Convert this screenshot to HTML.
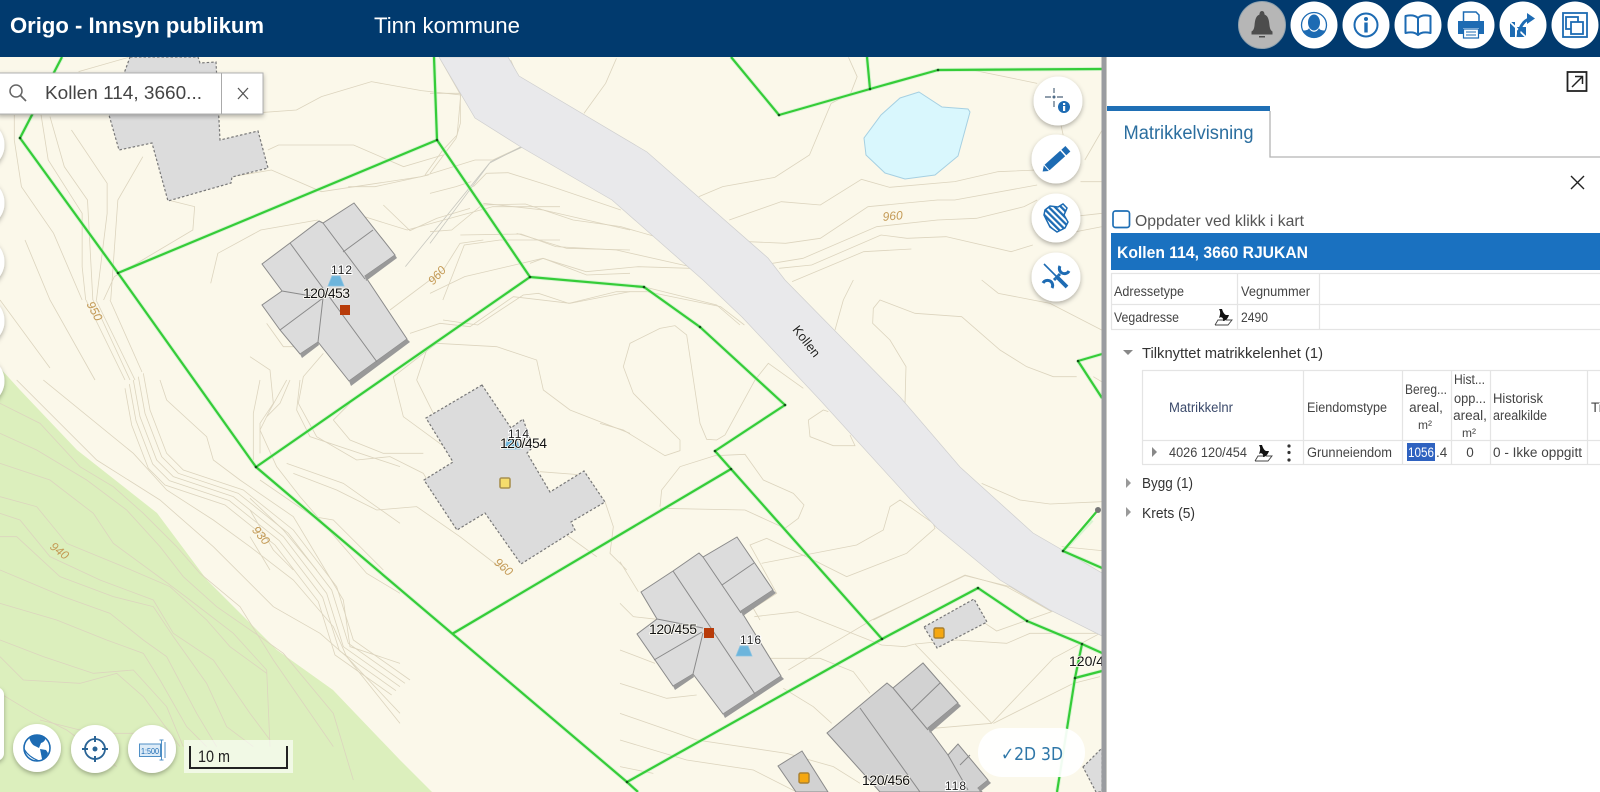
<!DOCTYPE html>
<html lang="nb"><head><meta charset="utf-8"><title>Origo - Innsyn publikum</title>
<style>
html,body{margin:0;padding:0;width:1600px;height:792px;overflow:hidden;background:#fff}
svg{display:block;font-family:"Liberation Sans",Arial,sans-serif}
.c path{vector-effect:non-scaling-stroke;fill:none;stroke:#dcd4be;stroke-width:.8}
.t{fill:#444;font-size:13.5px}
.m{fill:#111;font-size:14px;paint-order:stroke;stroke:#fffdf4;stroke-width:1.5px}
.h{fill:#c49a55;font-size:12px;font-style:italic}
.b{fill:#dcdcdc;stroke:#8a8a8a;stroke-width:1}
.d{fill:#dcdcdc;stroke:#777;stroke-width:1.2;stroke-dasharray:2.5 2}
.l{fill:none;stroke:#8a8a8a;stroke-width:1}
.a{fill:#999}
.g{fill:none;stroke:#35cc38;stroke-width:2.2;stroke-linejoin:round}
.g2{fill:none;stroke:#bdf0bd;stroke-width:4;stroke-linejoin:round;opacity:.55}
.i{fill:#1d6bb3}
.s{fill:none;stroke:#1d6bb3}
.tb{stroke:#e4e4e4;stroke-width:1.2;fill:none}
</style></head><body>
<svg xmlns="http://www.w3.org/2000/svg" width="1600" height="792" viewBox="0 0 1600 792">
<defs>
<filter id="sh" x="-30%" y="-30%" width="160%" height="170%"><feDropShadow dx="0" dy="2" stdDeviation="2.5" flood-color="#000" flood-opacity=".3"/></filter>
<pattern id="hatch" width="4.4" height="4.4" patternUnits="userSpaceOnUse" patternTransform="rotate(-45)"><rect width="4.4" height="4.4" fill="#fff"/><rect width="2.3" height="4.4" fill="#1d6bb3"/></pattern>
<clipPath id="uc"><circle cx="0" cy="0" r="12.5"/></clipPath>
</defs>

<rect width="1600" height="792" fill="#fbf8ea"/>
<polygon points="0,368 20,390 77,450 157,513 207,580 277,650 333,690 400,760 432,792 0,792" fill="#dcefbd"/>

<g class="c" transform="translate(0,380) scale(.33333)">
<path d="M400,0 L420,110 L470,240 L520,290 L700,350 L850,470 L980,640 L1030,800 L1200,920"/>
<path transform="translate(15,-10)" d="M400,0 L420,110 L470,240 L520,290 L700,350 L850,470 L980,640 L1030,800 L1200,920"/>
<path transform="translate(30,-20)" d="M400,0 L420,110 L470,240 L520,290 L700,350 L850,470 L980,640 L1030,800 L1200,920"/>
<path transform="translate(-12,12)" d="M400,0 L420,110 L470,240 L520,290 L700,350 L850,470 L980,640 L1030,800 L1200,920"/>
<path transform="translate(-25,25)" d="M400,0 L420,110 L470,240 L520,290 L700,350 L850,470 L980,640 L1030,800 L1200,920"/>
<path d="M50,0 L290,240 L480,360 L640,500 L820,680 L960,760 L1040,830 L1200,1000"/>
<path d="M130,0 L400,220 L500,330 L640,420 L750,500 L880,600 L1000,740 L1040,830 L1200,1030"/>
<path d="M480,0 L500,60 L620,170 L640,240 L720,300 L880,410 L1030,660 L1050,800 L1200,850"/>
<path d="M780,0 L760,100 L760,240"/>
<path d="M860,0 L810,90 L780,150 L830,260 L900,350 L1100,580 L1200,640"/>
<path d="M900,0 L890,90 L930,170 L1200,260"/>
<path d="M860,250 L1030,310 L1200,430"/>
<path d="M0,70 L120,130 L240,260 L340,320 L430,400 L530,500 L600,580 L720,680 L820,840 L1000,1100"/>
<path d="M0,160 L110,210 L260,300 L380,390 L480,500 L550,590 L650,680 L780,770 L850,820 L1000,1000 L1060,1200"/>
<path d="M0,250 L150,300 L280,400 L340,490 L490,600 L570,660 L700,760 L800,870 L810,1100"/>
<path d="M0,350 L110,380 L200,490 L370,560 L510,620 L620,720 L690,800 L800,880"/>
<path d="M0,400 L60,420 L150,530 L300,600 L460,660 L520,760 L640,840 L750,1000 L810,1080"/>
<path d="M0,470 L50,470 L180,590 L340,650 L460,680 L520,770 L620,910 L680,1040 L760,1100"/>
<path d="M0,570 L190,650 L330,700 L430,780 L500,830 L590,1000 L650,1100"/>
<path d="M0,670 L170,720 L320,780 L430,820 L480,900 L560,1040 L620,1100"/>
<path d="M0,780 L130,830 L280,880 L400,870 L500,980 L550,1100"/>
<path d="M0,830 L70,900 L240,910 L350,880 L430,950 L540,1100"/>
<path d="M0,940 L100,1000 L200,1050 L350,1160"/>
<path d="M120,1020 L280,1060 L470,1060"/>
</g>
<g class="c">
<path d="M86,300 L125,380"/><path d="M93,300 L130,380"/><path d="M96,300 L135,380"/><path d="M110,300 L142,372"/>
<path d="M0,300 L50,368"/><path d="M25,240 L50,300 L95,380"/>
</g>
<g class="c" transform="translate(0,0) scale(.35714,.33333)">
<path d="M220,215 L360,172"/>
<path d="M700,340 L830,330 L900,290 L1040,245 L1180,272 L1290,285 L1280,405 L1240,450 L1190,525"/>
<path d="M750,450 L780,435 L990,435 L1130,500 L1240,465"/>
<path d="M650,530 L760,510 L900,575 L1180,530 L1330,480 L1380,480 L1460,440 L1568,500"/>
<path d="M975,560 L1050,560 L1200,525"/>
<path d="M470,600 L545,620 L540,690 L320,830 L290,900"/>
<path d="M1135,800 L1370,490 L1460,440" style="stroke:#c8c8c0"/>
<path d="M590,850 L610,760 L730,690 L890,660"/>
<path d="M1020,650 L1140,690 L1380,620 L1568,620"/>
<path d="M1240,900 L1300,735 L1400,720 L1568,720"/>
<path d="M1230,172 L1290,285"/>
<path d="M1450,230 L1430,180"/>
<path d="M40,345 L40,420 L60,560 L150,700 L230,900"/>
<path d="M115,345 L135,480 L230,640 L230,800 L240,900"/>
<path d="M140,350 L180,500 L245,600 L260,900"/>
<path d="M200,390 L300,550 L300,640 L270,900"/>
<path d="M400,470 L330,600 L320,750 L310,900"/>
</g>
<g class="c" transform="translate(250,190) scale(.33333)">
<path d="M400,45 L480,122 L560,85 L660,55"/>
<path d="M700,40 L880,60 L1140,120"/>
<path d="M800,130 L950,175 L1140,180"/>
<path d="M700,150 L630,160 L580,240 L420,360"/>
<path d="M840,220 L880,205 L1010,255 L1140,250"/>
<path d="M480,430 L570,400 L660,410 L790,320 L960,340 L1140,305"/>
<path d="M430,560 L560,460 L740,470 L860,510 L880,600 L960,660 L1140,730"/>
<path d="M500,570 L530,480"/>
<path d="M500,570 L610,790"/>
<path d="M430,560 L460,680 L610,790"/>
<path d="M250,690 L300,750 L400,790 L520,790"/>
<path d="M250,690 L300,640"/>
<path d="M145,640 L160,560 L220,490"/>
<path d="M0,500 L60,540 L70,640 L30,700 L30,790"/>
<path d="M120,570 L90,640 L50,680"/>
<path d="M145,640 L200,740 L320,810 L420,800 L520,850 L620,1020"/>
<path d="M130,850 L260,900 L380,960 L500,950 L630,1040 L760,1140"/>
<path d="M30,870 L190,980 L250,990 L400,1140"/>
<path d="M0,925 L100,1020 L200,1140"/>
<path d="M0,960 L70,1080 L130,1140"/>
<path d="M0,1040 L60,1140"/>
<path d="M870,845 L1000,855"/>
<path d="M950,1035 L1040,1100"/>
<path d="M1065,935 L1090,1010 L1080,1090 L1130,1140"/>
<path d="M50,400 L100,470 L150,470"/>
</g>
<g class="c" transform="translate(430,50) scale(.43367,.33333)">
<path d="M70,555 L210,552 L290,590 L430,600 L600,650"/>
<path d="M0,545 L50,540 L120,465 L220,462 L330,510 L440,530 L520,560"/>
<path d="M100,410 L130,370 L180,368 L270,405 L440,480"/>
<path d="M0,430 L60,410 L95,395"/>
<path d="M0,730 L80,680 L260,625 L360,665 L480,650 L600,655"/>
<path d="M30,810 L110,825 L215,735 L250,730 L320,760 L430,725 L500,725 L670,770 L725,825"/>
<path d="M620,440 L675,410 L795,382 L875,315 L925,160"/>
<path d="M690,510 L810,455 L900,465 L995,388 L1060,412 L1210,395 L1310,365 L1400,360"/>
<path d="M735,575 L820,580 L900,565 L1010,470 L1170,450 L1210,450 L1400,405"/>
<path d="M790,640 L860,625 L1030,530 L1170,510 L1260,505 L1370,470 L1400,450"/>
<path d="M805,655 L880,645 L1040,555 L1100,565 L1190,560 L1340,605 L1390,585"/>
<path d="M835,695 L1000,605 L1110,597"/>
<path d="M430,25 L405,100 L355,190"/>
<path d="M965,22 L985,80 L970,130 L925,160"/>
<path d="M70,130 L70,220 L60,265 L0,370"/>
<path d="M0,130 L70,130"/>
<path d="M215,290 L140,335 L0,580" style="stroke:#c8c8c0"/>
<path d="M1250,60 L1400,100"/>
<path d="M1455,225 L1460,255"/>
<path d="M1510,330 L1550,240"/>
<path d="M1500,395 L1550,395"/>
<path d="M1480,500 L1550,490"/>
<path d="M1470,550 L1550,530"/>
</g>
<g class="c" transform="translate(600,280) scale(.33333)">
<path d="M0,430 L70,450 L195,527 L240,512 L240,480 L100,340 L70,260 L90,190 L180,145 L225,137 L260,165 L300,430 L320,478 L350,480 L375,465 L465,300 L505,250 L610,325"/>
<path d="M180,680 L185,630 L240,560 L345,527 L435,523 L490,600 L580,640 L612,675 L595,715 L555,745 L435,690 L180,685"/>
<path d="M625,420 L670,390 L685,395"/>
<path d="M625,420 L630,470 L700,497 L765,497 L750,465"/>
<path d="M485,850 L770,795 L850,750 L870,680 L900,660 L1000,730 L1005,745 L920,820 L740,890 L640,840 L500,775 L450,795 L530,940 L460,985 L480,1020"/>
<path d="M820,1020 L1095,885 L1220,920 L1355,995"/>
<path d="M1145,610 L1260,660 L1350,672 L1505,665"/>
<path d="M1385,800 L1505,812"/>
<path d="M705,150 L730,60 L760,0"/>
<path d="M915,370 L918,260 L870,180 L818,130 L820,85 L840,60 L945,100 L1085,110 L1200,210 L1280,260 L1360,290 L1430,290"/>
<path d="M1145,0 L1195,40 L1350,70 L1505,150"/>
<path d="M1480,290 L1505,305"/>
<path d="M130,20 L350,75 L420,135"/>
</g>
<g class="c" transform="translate(620,520) scale(.33333)">
<path d="M505,450 L755,300 L1035,167 L1170,200 L1295,275 L1130,333 L1095,310"/>
<path d="M885,372 L1115,610 L1300,415 L1440,340"/>
<path d="M1120,610 L1360,490 L1440,470"/>
<path d="M940,625 L1115,610"/>
<path d="M885,372 L1010,360 L1160,370 L1230,340 L1440,340"/>
<path d="M403,290 L533,275 L785,375 L855,380 L885,372"/>
<path d="M0,125 L55,215"/>
<path d="M0,250 L40,290 L112,298"/>
<path d="M0,390 L105,430"/>
<path d="M0,490 L140,535 L230,525"/>
<path d="M0,580 L230,660 L500,700 L640,740 L720,790"/>
<path d="M0,660 L200,720 L400,750 L530,816"/>
<path d="M0,740 L100,760"/>
<path d="M490,505 L580,560 L635,610"/>
<path d="M440,415 L600,415 L700,455 L750,520"/>
</g>

<polygon points="439,57 475,118 521,147 612,200 703,280 742,317 820,400 920,510 937,528 1000,580 1050,610 1102,636 1102,573 1033,533 960,467 900,397 785,280 768,258 647,152 519,76 508,57" fill="#e9e9eb" stroke="#cfcfcf" stroke-width=".7"/>
<polygon points="919,92 900,98 881,115 864,138 866,155 885,173 905,179 935,175 958,156 970,112 968,109 942,107" fill="#d9f7fd" stroke="#a6d0e2" stroke-width="1"/>

<!-- dashed buildings -->
<polygon class="d" points="130,57 198,57 200,63 216,62 220,140 258,131 268,168 232,177 231,183 168,201 152,143 119,150 109,115 130,57"/>
<polygon class="d" points="482,385 426,418 453,462 424,480 457,530 485,513 521,564 575,530 571,522 605,502 584,471 550,492 527,453 533,447 523,419 511,428"/>
<polygon class="d" points="924,627 974,599 987,622 937,648"/>
<polygon class="d" points="1083,767 1102,748 1102,792 1096,792"/>

<!-- 120/453 -->
<polygon class="b" points="262,264 290,243 319,221 323,223 354,203 395,255 365,276 407,339 349,381 318,342 300,354 280,330 262,305 282,291"/>
<polygon points="349,381 407,339 410,342 351,386" fill="#999"/>
<polygon points="365,276 395,255 397,258 366,281" fill="#999"/>
<polygon points="300,354 318,342 319,345 302,358" fill="#999"/>
<path class="l" d="M290,243L377,362M323,223L365,279M343,252L373,230M282,291L323,298M323,298L318,342M280,330L323,298"/>

<!-- 120/455 -->
<polygon class="b" points="641,592 673,571 699,553 703,557 737,537 773,590 741,611 781,676 723,714 693,674 673,686 637,634 657,619"/>
<polygon points="723,714 781,676 784,679 725,718" fill="#999"/>
<polygon points="741,611 773,590 776,593 743,616" fill="#999"/>
<polygon points="673,686 693,674 694,677 675,690" fill="#999"/>
<path class="l" d="M673,571L755,694M703,557L741,613M722,585L754,563M657,619L703,628M703,633L693,674M654,660L702,632"/>

<!-- 120/456 -->
<polygon fill="#d2d2d2" stroke="#8a8a8a" points="827,733 887,683 893,688 923,663 958,703 928,728 948,755 958,744 988,780 978,788 982,792 880,792"/>
<polygon points="928,728 958,703 961,706 930,733" fill="#999"/>
<polygon points="978,788 988,780 991,783 980,792" fill="#999"/>
<path class="l" d="M860,708L920,792M893,688L928,730M912,710L940,683M948,755L968,790M960,765L970,755"/>
<polygon fill="#d2d2d2" stroke="#8a8a8a" points="778,766 802,751 828,792 796,792"/>

<!-- green parcel lines -->
<g>
<path class="g2" d="M62,57L20,138L118,273L256,467L627,782L638,792M118,273L437,140L530,277L644,287L700,327L785,405L715,451L731,469L882,639M437,140L434,57M530,277L256,467M731,469L452,634M627,782L882,639L978,588L1027,621L1082,644L1102,653M1082,644L1075,678L1057,792M1075,678L1102,671M1092,520L1063,551L1102,568M1078,361L1102,354M1078,361L1102,398M731,57L779,115L870,89L938,70L1102,69M867,57L870,89"/>
<path class="g" d="M62,57L20,138L118,273L256,467L627,782L638,792M118,273L437,140L530,277L644,287L700,327L785,405L715,451L731,469L882,639M437,140L434,57M530,277L256,467M731,469L452,634M627,782L882,639L978,588L1027,621L1082,644L1102,653M1082,644L1075,678L1057,792M1075,678L1102,671M1063,551L1102,568M1098,510L1063,551M1078,361L1102,354M1078,361L1102,398M731,57L779,115L870,89L938,70L1102,69M867,57L870,89"/>
<g fill="#14521a"><circle cx="20" cy="138" r="1.300"/><circle cx="118" cy="273" r="1.300"/><circle cx="256" cy="467" r="1.300"/><circle cx="437" cy="140" r="1.300"/><circle cx="530" cy="277" r="1.300"/><circle cx="644" cy="287" r="1.300"/><circle cx="700" cy="327" r="1.300"/><circle cx="785" cy="405" r="1.300"/><circle cx="715" cy="451" r="1.300"/><circle cx="731" cy="469" r="1.300"/><circle cx="882" cy="639" r="1.300"/><circle cx="627" cy="782" r="1.300"/><circle cx="978" cy="588" r="1.300"/><circle cx="1027" cy="621" r="1.300"/><circle cx="1082" cy="644" r="1.300"/><circle cx="1075" cy="678" r="1.300"/><circle cx="1063" cy="551" r="1.300"/><circle cx="1078" cy="361" r="1.300"/><circle cx="779" cy="115" r="1.300"/><circle cx="870" cy="89" r="1.300"/><circle cx="938" cy="70" r="1.300"/></g>
<circle cx="1098" cy="510" r="3" fill="#777"/>
</g>

<!-- markers -->
<g fill="#6db5dc" stroke="#8cc4e2" stroke-width=".8"><polygon points="332,276 340,276 344,286 328,286"/><polygon points="508,438 516,438 520,449 504,449"/><polygon points="740,646 748,646 752,656 736,656"/></g>
<rect x="340" y="305" width="10" height="10" fill="#b83c0a"/>
<rect x="704" y="628" width="10" height="10" fill="#b83c0a"/>
<rect x="500" y="478" width="10" height="10" rx="1.500" fill="#f5dc6c" stroke="#a89050" stroke-width="1.600"/>
<rect x="934" y="628" width="10" height="10" rx="1.500" fill="#f5a710" stroke="#a98030" stroke-width="1.400"/>
<rect x="799" y="773" width="10" height="10" rx="1.500" fill="#f5a710" stroke="#a98030" stroke-width="1.400"/>

<!-- labels -->
<text class="m" x="303" y="298" textLength="47">120/453</text>
<text class="m" x="500" y="448" textLength="47">120/454</text>
<text class="m" x="649" y="634" textLength="48">120/455</text>
<text class="m" x="862" y="785" textLength="48">120/456</text>
<text class="m" x="1069" y="666">120/4</text>
<g font-size="12" fill="#222" stroke="#fff" stroke-width="2" paint-order="stroke">
<text x="331" y="274" textLength="21">112</text><text x="508" y="438" textLength="21">114</text><text x="740" y="644" textLength="21">116</text><text x="945" y="790" textLength="21">118</text></g>
<text class="h" transform="translate(440,278) rotate(-48)" text-anchor="middle">960</text>
<text class="h" transform="translate(91,313) rotate(62)" text-anchor="middle">950</text>
<text class="h" transform="translate(258,538) rotate(50)" text-anchor="middle">930</text>
<text class="h" transform="translate(57,554) rotate(38)" text-anchor="middle">940</text>
<text class="h" transform="translate(501,570) rotate(40)" text-anchor="middle">960</text>
<text class="h" transform="translate(893,220) rotate(-5)" text-anchor="middle">960</text>
<text transform="translate(803,344) rotate(52)" text-anchor="middle" font-size="13" fill="#222" stroke="#f2f2f2" stroke-width="1.500" paint-order="stroke">Kollen</text>

<!-- search box -->
<rect x="-2" y="73" width="265" height="41" fill="#fff" stroke="#b0b0b0" stroke-width="1" filter="url(#sh)"/>
<line x1="221.500" y1="73" x2="221.500" y2="114" stroke="#aaa"/>
<circle cx="16" cy="91" r="6" fill="none" stroke="#666" stroke-width="1.500"/><line x1="20.500" y1="95.500" x2="26" y2="101" stroke="#666" stroke-width="1.700"/>
<text x="45" y="99" font-size="18" fill="#444" textLength="157" lengthAdjust="spacingAndGlyphs">Kollen 114, 3660...</text>
<path d="M238,88L248,99M248,88L238,99" stroke="#555" stroke-width="1.300" fill="none"/>

<!-- left controls -->
<g fill="#fff" filter="url(#sh)">
<circle cx="-20" cy="145" r="24.500"/><circle cx="-20" cy="203" r="24.500"/><circle cx="-20" cy="262" r="24.500"/><circle cx="-20" cy="321" r="24.500"/><circle cx="-20" cy="381" r="24.500"/>
<rect x="-20" y="687" width="24" height="74" rx="8"/>
</g>

<!-- right map controls -->
<g fill="#fff" filter="url(#sh)"><circle cx="1058" cy="101" r="24.500"/><circle cx="1056" cy="159" r="24.500"/><circle cx="1056" cy="218" r="24.500"/><circle cx="1056" cy="277" r="24.500"/></g>
<g stroke="#6a7d90" stroke-width="1.400" fill="none"><path d="M1054,88v5M1054,101v6M1045,97h6M1057,97h6"/></g><circle cx="1054" cy="97" r="1.500" fill="#4d6a86"/>
<circle cx="1064" cy="107" r="6" class="i"/><rect x="1063" y="106" width="2.200" height="5" fill="#fff"/><rect x="1063" y="103" width="2.200" height="2" fill="#fff"/>
<g transform="translate(1056,159.500) rotate(-42)" class="i"><rect x="-12" y="-3.700" width="21" height="7.400"/><polygon points="-13,-3.700 -13,3.700 -18,0"/><rect x="10.500" y="-3.700" width="5.500" height="7.400"/></g>
<path d="M1045,210 L1050,206 L1058,207 L1063,204 L1067,208 L1064,215 L1068,222 L1065,228 L1057,232 L1050,227 L1044,215 Z" fill="url(#hatch)" stroke="#1d6bb3" stroke-width="1.500"/>
<g fill="none" stroke="#1d6bb3">
<path d="M1054,280 L1060,274" stroke-width="3"/>
<path d="M1060,266 A5,5 0 1 0 1069,271" stroke-width="3"/>
<path d="M1043,283 A5,5 0 1 1 1052,288" stroke-width="3"/>
<path d="M1044,264 L1068,288" stroke="#fff" stroke-width="4"/>
<path d="M1044,264 L1057,277" stroke-width="1.600"/>
<path d="M1056,276 L1067,287" stroke-width="3.800"/>
</g>

<!-- bottom-left -->
<g fill="#fff" filter="url(#sh)"><circle cx="37" cy="748" r="24"/><circle cx="95" cy="749" r="24"/><circle cx="152" cy="749" r="24"/></g>
<circle cx="37" cy="748" r="13" class="s" stroke-width="1.600"/>
<path d="M29,737 C33,734 40,734 45,737 C46,740 44,742 41,743 L39,748 L35,746 C32,745 30,741 29,737Z" class="i"/>
<path d="M40,749 L46,750 L48,753 L45,759 L42,759 L41,754Z" class="i"/>
<path d="M24,749 C28,756 34,759 39,761" fill="none" stroke="#1d6bb3" stroke-width="1.200"/>
<g stroke="#2a6496" fill="none"><circle cx="95" cy="749" r="10" stroke-width="1.800"/><path d="M95,736v6M95,756v6M82,749h6M102,749h6" stroke-width="2"/></g><circle cx="95" cy="749" r="2.500" fill="#2a6496"/>
<rect x="139.500" y="744" width="21" height="12.500" fill="#dcebf7" stroke="#4f8fc5" stroke-width="1"/>
<text x="141" y="754" font-size="8.500" fill="#1d6bb3" textLength="18" lengthAdjust="spacingAndGlyphs">1:500</text>
<path d="M161.500,740v20M159.500,740h4M159.500,760h4M165,742v16" stroke="#4f8fc5" fill="none"/>
<rect x="184" y="740" width="109" height="33" fill="#fff" fill-opacity=".6"/>
<path d="M190,746V768H287V746" fill="none" stroke="#222" stroke-width="2"/>
<text x="198" y="762" font-size="17" fill="#222" textLength="32" lengthAdjust="spacingAndGlyphs">10 m</text>

<rect x="978" y="728" width="107" height="49" rx="24" fill="#fff" fill-opacity=".93"/>
<text x="1001" y="760" font-size="18" fill="#2f77a8" textLength="62" lengthAdjust="spacingAndGlyphs" font-family="'DejaVu Sans','Liberation Sans',sans-serif">✓2D 3D</text>

<!-- panel -->
<rect x="1107" y="57" width="493" height="735" fill="#fff"/>
<rect x="1101.500" y="57" width="5" height="735" fill="#9a9ca0"/>

<!-- header -->
<rect x="0" y="0" width="1600" height="57" fill="#013a6e"/>
<text x="10" y="33" font-size="22" font-weight="bold" fill="#fff" textLength="254" lengthAdjust="spacingAndGlyphs">Origo - Innsyn publikum</text>
<text x="374" y="33" font-size="22" fill="#fff" textLength="146" lengthAdjust="spacingAndGlyphs">Tinn kommune</text>
<circle cx="1262" cy="25" r="23.500" fill="#b6b6b6" stroke="#8ea0ad" stroke-width="1"/>
<g fill="#fff"><circle cx="1314" cy="25" r="23.500"/><circle cx="1366" cy="25" r="23.500"/><circle cx="1418" cy="25" r="23.500"/><circle cx="1471" cy="25" r="23.500"/><circle cx="1523" cy="25" r="23.500"/><circle cx="1575" cy="25" r="23.500"/></g>
<g transform="translate(1262,25)" fill="#4d4d4d"><path d="M0,-14 c2,0 2.500,2 2.500,3.500 c4,1.500 4.500,6 5,11 c.5,4 1.500,5 3,6 v3 h-21 v-3 c1.500,-1 2.500,-2 3,-6 c.5,-5 1,-9.500 5,-11 c0,-1.500 .5,-3.500 2.500,-3.500z"/><rect x="-3" y="11" width="6" height="1.500"/></g>
<g transform="translate(1314,25)"><circle r="12.500" class="s" stroke-width="1.300"/><g clip-path="url(#uc)"><ellipse cx="0" cy="-2.500" rx="6" ry="8" class="i"/><path d="M-14,13 L-14,6 C-9,5 -6,6 -5,3 C-3,8 3,8 5,3 C6,6 9,5 14,6 L14,13Z" class="i"/></g></g>
<g transform="translate(1366,25)"><circle r="11.500" class="s" stroke-width="2"/><circle cy="-6" r="2" class="i"/><rect x="-1.700" y="-2.500" width="3.400" height="10" class="i"/></g>
<g transform="translate(1418,25)" class="s" stroke-width="2" fill="none" stroke-linejoin="round"><path d="M0,-7 C-3,-10 -8,-10 -12.500,-9 V8 C-8,7 -3,7 0,10 C3,7 8,7 12.500,8 V-9 C8,-10 3,-10 0,-7 Z M0,-7 V10"/></g>
<g transform="translate(1471,25)"><path d="M-7.500,-2 V-13 H5 L8,-10 V-2" fill="none" stroke="#1d6bb3" stroke-width="1.500"/><path d="M-13,-4 H13 V9 H8 V3 H-8 V9 H-13Z" class="i"/><rect x="-7.500" y="4" width="15" height="9" fill="#fff" stroke="#1d6bb3" stroke-width="1.200"/><path d="M-5,7H5M-5,10H5" stroke="#1d6bb3"/></g>
<g transform="translate(1523,25)"><path d="M-13,-3 L-8,-3 L-8,12 L-13,12Z M-6,2 H3 V12 H-6Z" class="i"/><path d="M-13,-3 L4,13" stroke="#fff" stroke-width="1.800"/><path d="M-5,12 C-4,3 0,-4 6,-6" fill="none" stroke="#1d6bb3" stroke-width="3"/><polygon points="4,-12 12,-6.500 4,-1" class="i"/></g>
<g transform="translate(1575,25)" fill="none" stroke="#1d6bb3" stroke-width="1.800"><rect x="-12" y="-12" width="24" height="24"/><rect x="-9" y="-8" width="12" height="12"/><rect x="-4" y="-3" width="12" height="12" fill="#fff"/></g>

<!-- expand -->
<rect x="1567.500" y="72" width="19" height="19" fill="none" stroke="#222" stroke-width="1.800"/>
<path d="M1572,87L1582,77M1575,76.500h7.500v7.500" fill="none" stroke="#222" stroke-width="1.500"/>

<!-- tab -->
<rect x="1107" y="106" width="163" height="5" fill="#1f6fb5"/>
<path d="M1270,111V157H1600" fill="none" stroke="#b4b4b4" stroke-width="1.300"/>
<text x="1123.500" y="139" font-size="19" fill="#2b6e9f" textLength="130" lengthAdjust="spacingAndGlyphs">Matrikkelvisning</text>
<path d="M1571,176L1584,189M1584,176L1571,189" stroke="#222" stroke-width="1.400" fill="none"/>

<rect x="1113" y="211" width="16.500" height="16.500" rx="2.500" fill="#fff" stroke="#1f6fb5" stroke-width="1.700"/>
<text x="1135" y="226" font-size="16" fill="#555" textLength="169" lengthAdjust="spacingAndGlyphs">Oppdater ved klikk i kart</text>

<rect x="1111" y="233" width="489" height="37" fill="#1a71c0"/>
<text x="1117" y="258" font-size="17" font-weight="bold" fill="#fff" textLength="191" lengthAdjust="spacingAndGlyphs">Kollen 114, 3660 RJUKAN</text>

<path class="tb" d="M1111.500,273V329M1237.500,273V329M1319.500,273V329M1111,273.500H1600M1111,304.500H1600M1111,329.500H1600"/>
<text class="t" x="1114" y="296" textLength="70" lengthAdjust="spacingAndGlyphs">Adressetype</text>
<text class="t" x="1241" y="296" textLength="69" lengthAdjust="spacingAndGlyphs">Vegnummer</text>
<text class="t" x="1114" y="322" textLength="65" lengthAdjust="spacingAndGlyphs">Vegadresse</text>
<text class="t" x="1241" y="322" textLength="27" lengthAdjust="spacingAndGlyphs">2490</text>
<g transform="translate(1223,317)"><path d="M-8,8 L-5,3 H1 M3,3 H9 L5,8 H-8" fill="none" stroke="#444" stroke-width=".9"/><path d="M-4,-8 L-1,-8 C0,-5 1,-3 3,-2 L6,-2 C5,1 3,4 0,4 C1,1 -2,-1 -4,1 C-3,-2 -2,-5 -4,-8Z" fill="#111"/></g>

<polygon points="1123,350 1133,350 1128,355" fill="#888"/>
<text x="1142" y="358" font-size="15" fill="#333" textLength="181" lengthAdjust="spacingAndGlyphs">Tilknyttet matrikkelenhet (1)</text>

<path class="tb" d="M1142.500,370V464M1303.500,370V464M1402.500,370V464M1451.500,370V464M1490.500,370V464M1587.500,370V464M1142,370.500H1600M1142,440.500H1600M1142,464.500H1600"/>
<text class="t" x="1169" y="412" style="fill:#3b4a6b" textLength="64" lengthAdjust="spacingAndGlyphs">Matrikkelnr</text>
<text class="t" x="1307" y="412" textLength="80" lengthAdjust="spacingAndGlyphs">Eiendomstype</text>
<text class="t" x="1405" y="394" textLength="42" lengthAdjust="spacingAndGlyphs">Bereg...</text>
<text class="t" x="1426" y="412" text-anchor="middle">areal,</text>
<text class="t" x="1425" y="429" text-anchor="middle" style="font-size:12px">m²</text>
<text class="t" x="1454" y="384" textLength="31" lengthAdjust="spacingAndGlyphs">Hist...</text>
<text class="t" x="1454" y="403" textLength="32" lengthAdjust="spacingAndGlyphs">opp...</text>
<text class="t" x="1470" y="420" text-anchor="middle">areal,</text>
<text class="t" x="1469" y="437" text-anchor="middle" style="font-size:12px">m²</text>
<text class="t" x="1493" y="403" textLength="50" lengthAdjust="spacingAndGlyphs">Historisk</text>
<text class="t" x="1493" y="420" textLength="54" lengthAdjust="spacingAndGlyphs">arealkilde</text>
<text class="t" x="1591" y="412">Ti</text>

<polygon points="1152,447 1157,452 1152,457" fill="#888"/>
<text class="t" x="1169" y="457" textLength="78" lengthAdjust="spacingAndGlyphs">4026 120/454</text>
<g transform="translate(1263,453)"><path d="M-8,8 L-5,3 H1 M3,3 H9 L5,8 H-8" fill="none" stroke="#444" stroke-width=".9"/><path d="M-4,-8 L-1,-8 C0,-5 1,-3 3,-2 L6,-2 C5,1 3,4 0,4 C1,1 -2,-1 -4,1 C-3,-2 -2,-5 -4,-8Z" fill="#111"/></g>
<g fill="#333"><circle cx="1289" cy="446" r="1.600"/><circle cx="1289" cy="452.500" r="1.600"/><circle cx="1289" cy="460" r="1.600"/></g>
<text class="t" x="1307" y="457" textLength="85" lengthAdjust="spacingAndGlyphs">Grunneiendom</text>
<rect x="1407" y="443" width="28" height="18" fill="#2f62c0"/>
<text x="1408" y="457" font-size="13.500" fill="#fff" textLength="26" lengthAdjust="spacingAndGlyphs">1056</text>
<text class="t" x="1436" y="457">.4</text>
<text class="t" x="1470" y="457" text-anchor="middle">0</text>
<text class="t" x="1493" y="457" textLength="89" lengthAdjust="spacingAndGlyphs">0 - Ikke oppgitt</text>

<polygon points="1126,478 1131,483 1126,488" fill="#999"/>
<text x="1142" y="488" font-size="15" fill="#333" textLength="51" lengthAdjust="spacingAndGlyphs">Bygg (1)</text>
<polygon points="1126,507 1131,512 1126,517" fill="#999"/>
<text x="1142" y="518" font-size="15" fill="#333" textLength="53" lengthAdjust="spacingAndGlyphs">Krets (5)</text>
</svg>
</body></html>
